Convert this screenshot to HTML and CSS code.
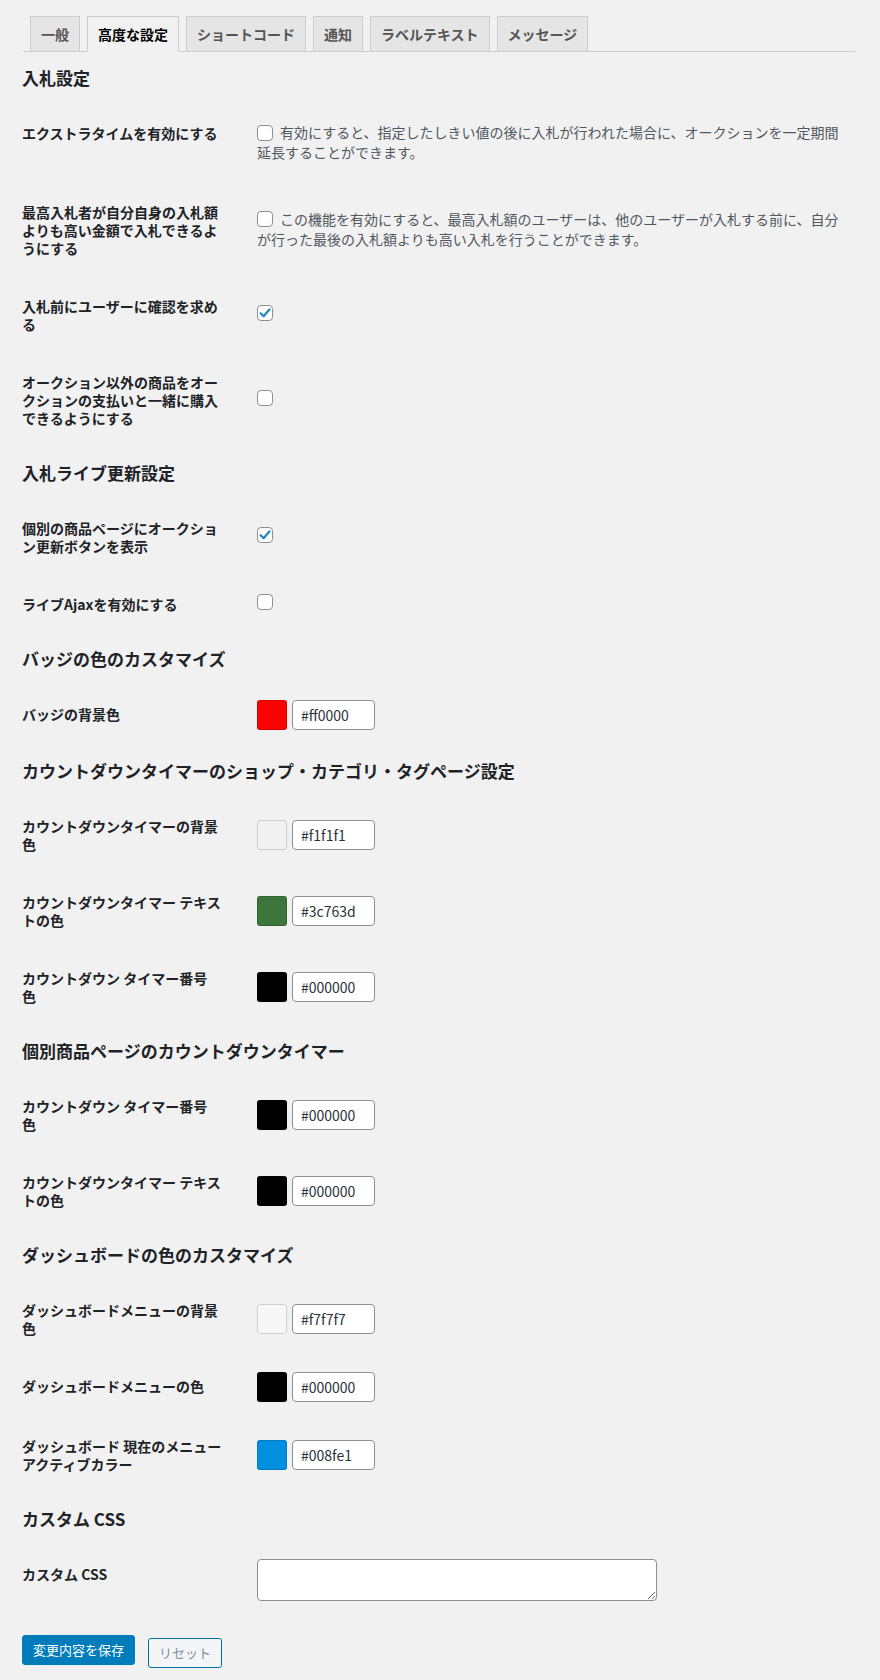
FILE: index.html
```html
<!DOCTYPE html>
<html lang="ja">
<head>
<meta charset="utf-8">
<title>高度な設定</title>
<link rel="stylesheet" href="styles.css">
</head>
<body>
<div class="wrap">
  <nav class="nav-tabs">
    <a class="nav-tab" href="#">一般</a>
    <a class="nav-tab active" href="#">高度な設定</a>
    <a class="nav-tab" href="#">ショートコード</a>
    <a class="nav-tab" href="#">通知</a>
    <a class="nav-tab" href="#">ラベルテキスト</a>
    <a class="nav-tab" href="#">メッセージ</a>
  </nav>

  <h2 class="section-title">入札設定</h2>
  <table class="form-table">
    <tr>
      <th>エクストラタイムを有効にする</th>
      <td class="td-desc"><span class="cb"></span>有効にすると、指定したしきい値の後に入札が行われた場合に、オークションを一定期間延長することができます。</td>
    </tr>
    <tr>
      <th>最高入札者が自分自身の入札額よりも高い金額で入札できるようにする</th>
      <td class="td-desc"><span class="cb"></span>この機能を有効にすると、最高入札額のユーザーは、他のユーザーが入札する前に、自分が行った最後の入札額よりも高い入札を行うことができます。</td>
    </tr>
    <tr>
      <th>入札前にユーザーに確認を求める</th>
      <td class="td-check"><span class="cb cb-block checked"><svg viewBox="0 0 14 14" width="14" height="14"><path d="M2.6 7.2 L5.6 10.2 L11.4 3.4" fill="none" stroke="#1e8cbe" stroke-width="2.3" stroke-linecap="round" stroke-linejoin="round"/></svg></span></td>
    </tr>
    <tr>
      <th>オークション以外の商品をオークションの支払いと一緒に購入できるようにする</th>
      <td class="td-check"><span class="cb cb-block"></span></td>
    </tr>
  </table>

  <h2 class="section-title">入札ライブ更新設定</h2>
  <table class="form-table">
    <tr>
      <th>個別の商品ページにオークション更新ボタンを表示</th>
      <td class="td-check"><span class="cb cb-block checked"><svg viewBox="0 0 14 14" width="14" height="14"><path d="M2.6 7.2 L5.6 10.2 L11.4 3.4" fill="none" stroke="#1e8cbe" stroke-width="2.3" stroke-linecap="round" stroke-linejoin="round"/></svg></span></td>
    </tr>
    <tr>
      <th>ライブAjaxを有効にする</th>
      <td class="td-check"><span class="cb cb-block"></span></td>
    </tr>
  </table>

  <h2 class="section-title">バッジの色のカスタマイズ</h2>
  <table class="form-table">
    <tr>
      <th>バッジの背景色</th>
      <td><div class="color-field"><span class="swatch swatch-red"></span><span class="hex">#ff0000</span></div></td>
    </tr>
  </table>

  <h2 class="section-title">カウントダウンタイマーのショップ・カテゴリ・タグページ設定</h2>
  <table class="form-table">
    <tr>
      <th>カウントダウンタイマーの背景色</th>
      <td><div class="color-field"><span class="swatch swatch-f1"></span><span class="hex">#f1f1f1</span></div></td>
    </tr>
    <tr>
      <th>カウントダウンタイマー テキストの色</th>
      <td><div class="color-field"><span class="swatch swatch-green"></span><span class="hex">#3c763d</span></div></td>
    </tr>
    <tr>
      <th>カウントダウン タイマー番号<br>色</th>
      <td><div class="color-field"><span class="swatch swatch-black"></span><span class="hex">#000000</span></div></td>
    </tr>
  </table>

  <h2 class="section-title">個別商品ページのカウントダウンタイマー</h2>
  <table class="form-table">
    <tr>
      <th>カウントダウン タイマー番号<br>色</th>
      <td><div class="color-field"><span class="swatch swatch-black"></span><span class="hex">#000000</span></div></td>
    </tr>
    <tr>
      <th>カウントダウンタイマー テキストの色</th>
      <td><div class="color-field"><span class="swatch swatch-black"></span><span class="hex">#000000</span></div></td>
    </tr>
  </table>

  <h2 class="section-title">ダッシュボードの色のカスタマイズ</h2>
  <table class="form-table">
    <tr>
      <th>ダッシュボードメニューの背景色</th>
      <td><div class="color-field"><span class="swatch swatch-f7"></span><span class="hex">#f7f7f7</span></div></td>
    </tr>
    <tr>
      <th>ダッシュボードメニューの色</th>
      <td><div class="color-field"><span class="swatch swatch-black"></span><span class="hex">#000000</span></div></td>
    </tr>
    <tr>
      <th>ダッシュボード 現在のメニュー<br>アクティブカラー</th>
      <td><div class="color-field"><span class="swatch swatch-blue"></span><span class="hex">#008fe1</span></div></td>
    </tr>
  </table>

  <h2 class="section-title">カスタム CSS</h2>
  <table class="form-table">
    <tr>
      <th>カスタム CSS</th>
      <td class="td-area"><textarea class="css-input"></textarea></td>
    </tr>
  </table>

  <div class="submit">
    <span class="btn btn-primary">変更内容を保存</span>
    <span class="btn btn-secondary">リセット</span>
  </div>
</div>
</body>
</html>
```

FILE: styles.css
```css
* { box-sizing: border-box; }

html, body {
  margin: 0;
  padding: 0;
  background: #f1f1f1;
}

body {
  font-family: "Noto Sans CJK JP", "Noto Sans", sans-serif;
  font-size: 14px;
  color: #1d2327;
}

.wrap {
  margin: 0 25px 0 23px;
  padding-top: 16px;
}

/* tabs */
.nav-tabs {
  display: flex;
  align-items: flex-start;
  height: 36px;
  border-bottom: 1px solid #cccccc;
}

.nav-tab {
  display: block;
  margin-left: 7px;
  padding: 5px 10px;
  border: 1px solid #cccccc;
  border-bottom: 0;
  background: #e5e5e5;
  color: #555555;
  font-size: 14px;
  font-weight: 600;
  line-height: 24px;
  text-decoration: none;
  white-space: nowrap;
}

.nav-tab.active {
  background: #f1f1f1;
  color: #000000;
  border-bottom: 1px solid #f1f1f1;
  position: relative;
  z-index: 1;
}

/* section headings */
.section-title {
  margin: 15px 0 15px -1px;
  font-size: 17px;
  font-weight: 600;
  line-height: 22px;
  color: #1d2327;
}

/* form tables */
.form-table {
  width: 100%;
  border-collapse: collapse;
  table-layout: fixed;
  margin-left: -1px;
}

.form-table th {
  width: 225px;
  padding: 20px 24px 20px 0;
  text-align: left;
  vertical-align: top;
  font-size: 14px;
  font-weight: 600;
  line-height: 18px;
  color: #1d2327;
}

.form-table td {
  padding: 15px 10px;
  vertical-align: middle;
  line-height: 18px;
}

.form-table td.td-desc {
  padding: 18px 10px 21px;
  line-height: 20px;
  color: #50575e;
}

.form-table td.td-check {
  padding: 15px 10px 20px;
}

.form-table td.td-area {
  padding: 14px 10px 16px;
}

/* checkbox */
.cb {
  display: inline-block;
  width: 16px;
  height: 16px;
  margin: -3px 7px 0 0;
  border: 1px solid #8c8f94;
  border-radius: 4px;
  background: #ffffff;
  vertical-align: middle;
}

.cb-block {
  display: block;
  margin: 0;
}

.cb svg {
  display: block;
  width: 14px;
  height: 14px;
}

/* color picker */
.color-field {
  display: flex;
  align-items: center;
  gap: 5px;
}

.swatch {
  display: block;
  width: 30px;
  height: 30px;
  border-radius: 3px;
  border: 1px solid rgba(0, 0, 0, 0.14);
}

.swatch-red { background: #ff0000; }
.swatch-f1 { background: #f1f1f1; border-color: #cfcfcf; }
.swatch-green { background: #3c763d; }
.swatch-black { background: #000000; }
.swatch-f7 { background: #f7f7f7; border-color: #cfcfcf; }
.swatch-blue { background: #008fe1; }

.hex {
  display: block;
  width: 83px;
  height: 30px;
  padding: 0 8px;
  border: 1px solid #8c8f94;
  border-radius: 4px;
  background: #ffffff;
  font-size: 14px;
  line-height: 28px;
  color: #2c3338;
}

/* textarea */
.css-input {
  display: block;
  width: 400px;
  height: 42px;
  margin: 0;
  border: 1px solid #8c8f94;
  border-radius: 4px;
  background: #ffffff;
  font-family: inherit;
}

/* buttons */
.submit {
  display: flex;
  align-items: flex-start;
  gap: 13px;
  margin-top: 18px;
  margin-left: -1px;
  padding-bottom: 12px;
}

.btn {
  display: block;
  height: 30px;
  padding: 0 10px;
  border: 1px solid;
  border-radius: 3px;
  font-size: 13px;
  line-height: 28px;
  white-space: nowrap;
}

.btn-primary {
  background: #007cba;
  border-color: #007cba;
  color: #ffffff;
}

.btn-secondary {
  margin-top: 3px;
  background: #f3f5f6;
  border-color: #0071a1;
  color: #7c8fa0;
}
```
